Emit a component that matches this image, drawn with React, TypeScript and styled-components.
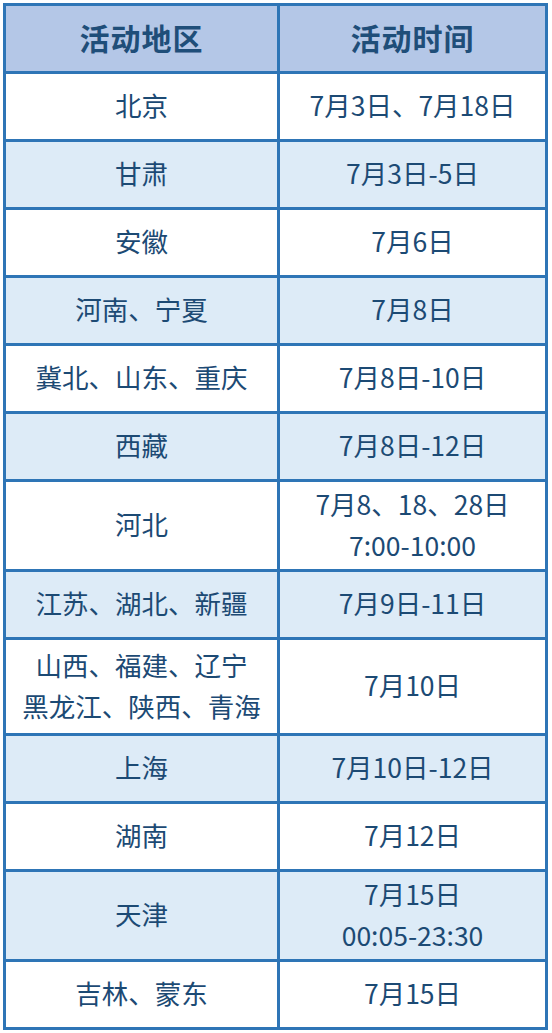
import React from 'react';
import styled, { createGlobalStyle } from 'styled-components';

const GlobalStyle = createGlobalStyle`
  html, body {
    margin: 0;
    padding: 0;
    background: #fff;
  }
  body {
    font-family: "Noto Sans CJK SC", "Noto Sans", sans-serif;
  }
`;

// page holds the sheet, with a small white margin like the screenshot
const Page = styled.div`
  padding: 3px;
  width: 552px;
  box-sizing: border-box;
`;

// the blue lines come from the background showing through the gaps
const Sheet = styled.div`
  display: inline-grid;
  grid-template-columns: 271px 265px;
  gap: 3px;
  padding: 3px;
  background: #2e75b6;
`;

const HeadCell = styled.div`
  height: 65px;
  box-sizing: border-box;
  padding-bottom: 4px;
  display: flex;
  align-items: center;
  justify-content: center;
  background: #b4c7e7;
  color: #1f4e79;
  font-size: 30px;
  font-weight: 700;
  letter-spacing: 1px;
`;

const Cell = styled.div<{ $alt: boolean; $h: number }>`
  height: ${(p) => p.$h}px;
  box-sizing: border-box;
  padding-bottom: 4px;
  display: flex;
  flex-direction: column;
  align-items: center;
  justify-content: center;
  background: ${(p) => (p.$alt ? '#ddebf7' : '#ffffff')};
  color: #1c4a74;
  font-size: 26.5px;
  line-height: 41px;
  text-align: center;
  white-space: nowrap;
`;

interface Row {
  area: string[];
  time: string[];
  h?: number;
}

const rows: Row[] = [
  { area: ['北京'], time: ['7月3日、7月18日'] },
  { area: ['甘肃'], time: ['7月3日-5日'] },
  { area: ['安徽'], time: ['7月6日'] },
  { area: ['河南、宁夏'], time: ['7月8日'] },
  { area: ['冀北、山东、重庆'], time: ['7月8日-10日'] },
  { area: ['西藏'], time: ['7月8日-12日'] },
  { area: ['河北'], time: ['7月8、18、28日', '7:00-10:00'], h: 87 },
  { area: ['江苏、湖北、新疆'], time: ['7月9日-11日'] },
  { area: ['山西、福建、辽宁', '黑龙江、陕西、青海'], time: ['7月10日'], h: 93 },
  { area: ['上海'], time: ['7月10日-12日'] },
  { area: ['湖南'], time: ['7月12日'] },
  { area: ['天津'], time: ['7月15日', '00:05-23:30'], h: 87 },
  { area: ['吉林、蒙东'], time: ['7月15日'] },
];

const Lines = ({ items }: { items: string[] }) => (
  <>
    {items.map((t) => (
      <span key={t}>{t}</span>
    ))}
  </>
);

export default function App() {
  return (
    <Page>
      <GlobalStyle />
      <Sheet>
        <HeadCell>活动地区</HeadCell>
        <HeadCell>活动时间</HeadCell>
        {rows.map((r, i) => (
          <React.Fragment key={i}>
            <Cell $alt={i % 2 === 1} $h={r.h ?? 65}>
              <Lines items={r.area} />
            </Cell>
            <Cell $alt={i % 2 === 1} $h={r.h ?? 65}>
              <Lines items={r.time} />
            </Cell>
          </React.Fragment>
        ))}
      </Sheet>
    </Page>
  );
}
